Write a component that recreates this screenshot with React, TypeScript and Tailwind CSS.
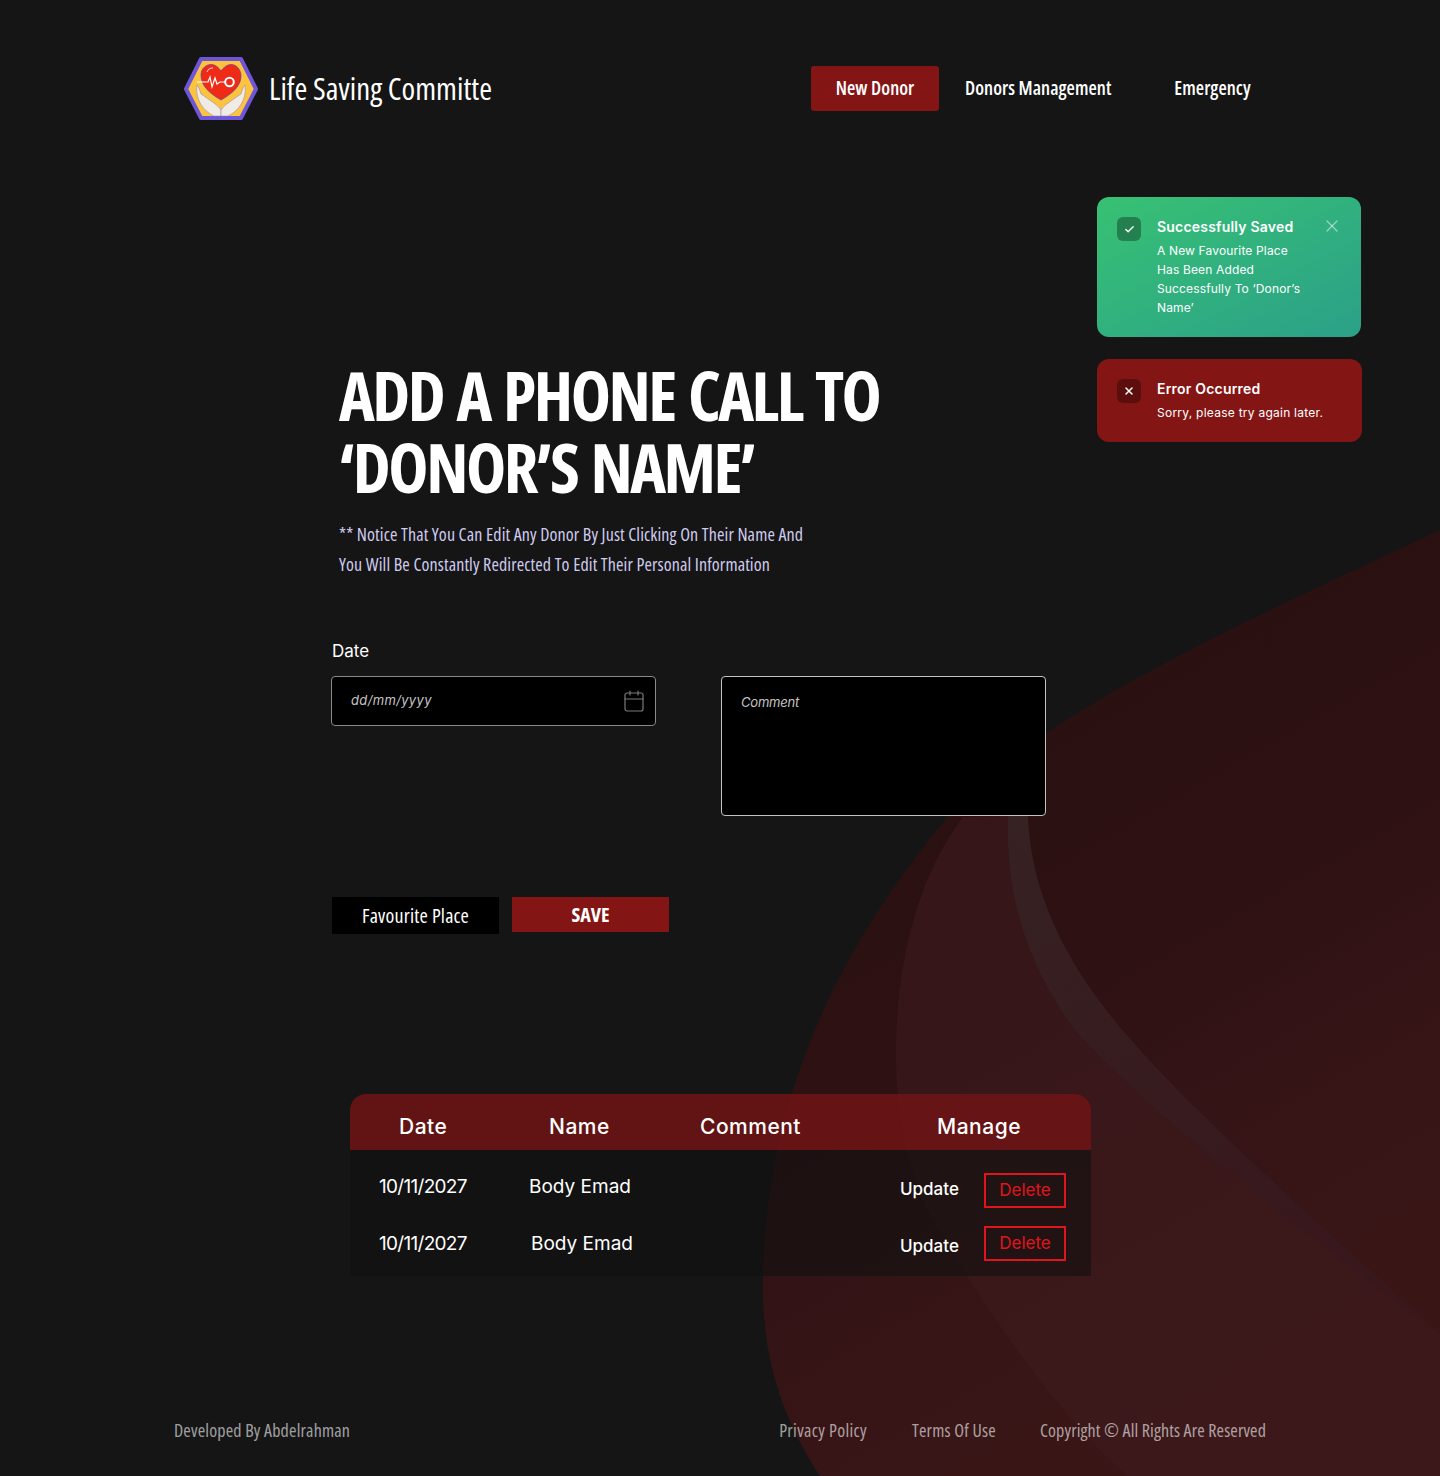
import { Calendar, Check, X } from "lucide-react";

const cond = "font-['Open_Sans',sans-serif] font-stretch-[75%]";
const pop = "font-['Inter','Noto_Sans',sans-serif]";

const rows = [
  { date: "10/11/2027", name: "Body Emad", nameClass: "w-[371px]", deleteClass: "-mt-[1px]" },
  { date: "10/11/2027", name: "Body Emad", nameClass: "ml-[2px] w-[369px]", deleteClass: "-mt-[5px]" },
];

const Logo = () => (
  <svg viewBox="0 0 74 66" className="w-[74px] h-[66px] shrink-0">
    <path d="M17 3H57L72 33L57 62H17L2 33Z" fill="#fcc43e" stroke="#6f55d8" strokeWidth="4" strokeLinejoin="round" />
    <path d="M13 29C15 31 16 35 17 38L23 42C28 46 34 49 37 54V60H30C19 55 11 43 13 29Z" fill="#f1ebe6" stroke="#8a7aa8" strokeWidth="0.5" />
    <path d="M61 29C59 31 58 35 57 38L51 42C46 46 40 49 37 54V60H44C55 55 63 43 61 29Z" fill="#f1ebe6" stroke="#8a7aa8" strokeWidth="0.5" />
    <path d="M37 44C27 38 17 31 17 19C17 12 23 8 28 8.500C32 9 35 12 37 15C39 12 43 8.500 47 8.500C53 8.500 57 14 57 20C57 31 47 38 37 44Z" fill="#ef2b17" stroke="#6b3aa8" strokeWidth="0.7" />
    <path d="M13 26H24L26 21L28 31L31 22L33 28L36 26H41" fill="none" stroke="#fff" strokeWidth="1.200" />
    <circle cx="45.500" cy="26" r="4.300" fill="#ef2b17" stroke="#fff" strokeWidth="2" />
    <path d="M23 16C24 13 26 12 29 12" fill="none" stroke="#fff" strokeWidth="0.800" />
  </svg>
);

export default function App() {
  return (
    <div className="relative w-[1440px] h-[1476px] overflow-hidden bg-[#151515] text-white">
      {/* background swoosh */}
      <svg viewBox="0 0 1440 1476" className="absolute inset-0 w-[1440px] h-[1476px]">
        <defs>
          <linearGradient id="swoosh" x1="800" y1="600" x2="1300" y2="1476" gradientUnits="userSpaceOnUse">
            <stop offset="0" stopColor="#261010" />
            <stop offset="0.46" stopColor="#2e1113" />
            <stop offset="0.64" stopColor="#351416" />
            <stop offset="1" stopColor="#3c1616" />
          </linearGradient>
          <linearGradient id="streak" x1="1020" y1="816" x2="1300" y2="1240" gradientUnits="userSpaceOnUse">
            <stop offset="0" stopColor="#362123" />
            <stop offset="1" stopColor="#38181c" />
          </linearGradient>
        </defs>
        <path d="M1440 530C1250 620 1040 710 945 820C830 960 763 1110 763 1290C763 1370 790 1430 820 1476H1440Z" fill="url(#swoosh)" />
        <path d="M963 817C915 880 896 970 896 1054C896 1130 915 1195 941 1234C975 1290 1050 1410 1128 1476H1440V1334C1300 1230 1140 1105 1075 1030C1030 970 1005 900 1008 816Z" fill="#3d1a1e" opacity="0.6" />
        <path d="M1008 816C1005 900 1030 970 1075 1030C1140 1105 1300 1230 1440 1334C1310 1215 1160 1085 1097 998C1055 940 1030 880 1028 816Z" fill="url(#streak)" />
      </svg>

      <header className="relative flex items-center pl-[184px] pt-[56px]">
        <Logo />
        <span className={`${cond} mb-[2px] ml-[11px] text-[31px] leading-[64px]`}>Life Saving Committe</span>
        <nav className={`${cond} absolute left-[811px] top-[66px] flex items-center text-[19px] font-semibold tracking-[0.05px]`}>
          <a className="flex h-[45px] w-[128px] items-center justify-center rounded-[3px] bg-[#841515]">New Donor</a>
          <a className="ml-[26px]">Donors Management</a>
          <a className="ml-[63px]">Emergency</a>
        </nav>
      </header>

      <div className={`${pop} absolute left-[1097px] top-[197px] w-[264px] flex flex-col gap-[22px]`}>
        <div className="relative flex h-[140px] rounded-[12px] bg-gradient-to-br from-[#38c172] to-[#2ba088] pl-[20px] pt-[20px]">
          <span className="flex size-[24px] shrink-0 items-center justify-center rounded-[6px] bg-[#25804f]"><Check size={11} strokeWidth={3} /></span>
          <div className="ml-[16px]">
            <div className="text-[14px] font-semibold leading-[20px] tracking-[0.2px]">Successfully Saved</div>
            <div className="mt-[4px] w-[150px] text-[12px] leading-[19px] tracking-[0.15px]">A New Favourite Place Has Been Added Successfully To ‘Donor’s Name’</div>
          </div>
          <X size={20} strokeWidth={1.5} className="absolute right-[19px] top-[19px] text-white/50" />
        </div>
        <div className="flex h-[83px] w-[265px] rounded-[12px] bg-[#841515] pl-[20px] pt-[20px]">
          <span className="flex size-[24px] shrink-0 items-center justify-center rounded-[6px] bg-[#5c0e0e]"><X size={12} strokeWidth={3} /></span>
          <div className="ml-[16px]">
            <div className="text-[14px] font-semibold leading-[20px] tracking-[0.2px]">Error Occurred</div>
            <div className="mt-[4px] text-[12px] leading-[19px] tracking-[0.25px]">Sorry, please try again later.</div>
          </div>
        </div>
      </div>

      <main className="relative ml-[331px] mt-[237px]">
        <h1 className={`${cond} ml-[8px] text-[68px] font-bold leading-[72px] tracking-[-2.5px] [word-spacing:3.5px]`}>ADD A PHONE CALL TO<br />‘DONOR’S NAME’</h1>
        <p className={`${cond} ml-[8px] mt-[16px] text-[18px] leading-[30px] tracking-[0.13px] text-[#cfcbef]`}>
          ** Notice That You Can Edit Any Donor By Just Clicking On Their Name And<br />
          You Will Be Constantly Redirected To Edit Their Personal Information
        </p>

        <label className={`${pop} ml-[1px] mt-[60px] block text-[17px] leading-[24px]`}>Date</label>
        <div className="mt-[13px] flex gap-[65px]">
          <div className={`${pop} flex h-[50px] w-[325px] items-center justify-between rounded-[4px] border border-[#8a8a8a] bg-black pl-[19px] pr-[9px] text-[13px] italic tracking-[0.35px] text-[#c4c4c4]`}>
            dd/mm/yyyy
            <Calendar size={24} strokeWidth={1.2} className="text-[#7a7a7a]" />
          </div>
          <div className={`${pop} h-[140px] w-[325px] rounded-[4px] border border-[#c4c4c4] bg-black pl-[19px] pt-[16px] text-[13px] italic leading-[18px] tracking-[-0.2px] text-[#c4c4c4]`}>Comment</div>
        </div>

        <div className={`${cond} ml-[1px] mt-[81px] flex items-start gap-[13px]`}>
          <button className="h-[37px] w-[167px] bg-black text-[20px] tracking-[0.2px]">Favourite Place</button>
          <button className="h-[35px] w-[157px] bg-[#841515] text-[20px] font-bold">SAVE</button>
        </div>

        <section className={`${pop} ml-[19px] mt-[160px] h-[182px] w-[741px] rounded-t-[16px] bg-[#111111]/60`}>
          <div className="flex h-[56px] items-center rounded-t-[16px] bg-[#841515]/70 pt-[10px] text-[21px] font-medium tracking-[0.5px]">
            <span className="ml-[49px] w-[150px]">Date</span>
            <span className="w-[151px]">Name</span>
            <span className="w-[237px]">Comment</span>
            <span>Manage</span>
          </div>
          <div className="flex flex-col pt-[24px]">
            {rows.map((row, i) => (
              <div key={i} className="flex h-[57px] items-start pl-[29px] text-[19px]">
                <span className="w-[150px] leading-[26px] tracking-[-0.7px]">{row.date}</span>
                <span className={`${row.nameClass} leading-[26px]`}>{row.name}</span>
                <span className="mt-[3px] w-[84px] text-[17px] font-medium leading-[24px]">Update</span>
                <button className={`${row.deleteClass} h-[35px] w-[82px] border-2 border-[#e0151b] text-[17px] text-[#e0151b]`}>Delete</button>
              </div>
            ))}
          </div>
        </section>
      </main>

      <footer className={`${cond} absolute left-[174px] top-[1419px] flex w-[1092px] justify-between text-[18px] leading-[22px] tracking-[0.17px] text-white/60`}>
        <span>Developed By Abdelrahman</span>
        <div className="flex gap-[44px]">
          <a className="mr-[1px] tracking-[0.35px]">Privacy Policy</a>
          <a className="tracking-[0.2px]">Terms Of Use</a>
          <a className="tracking-[0.13px]">Copyright © All Rights Are Reserved</a>
        </div>
      </footer>
    </div>
  );
}
